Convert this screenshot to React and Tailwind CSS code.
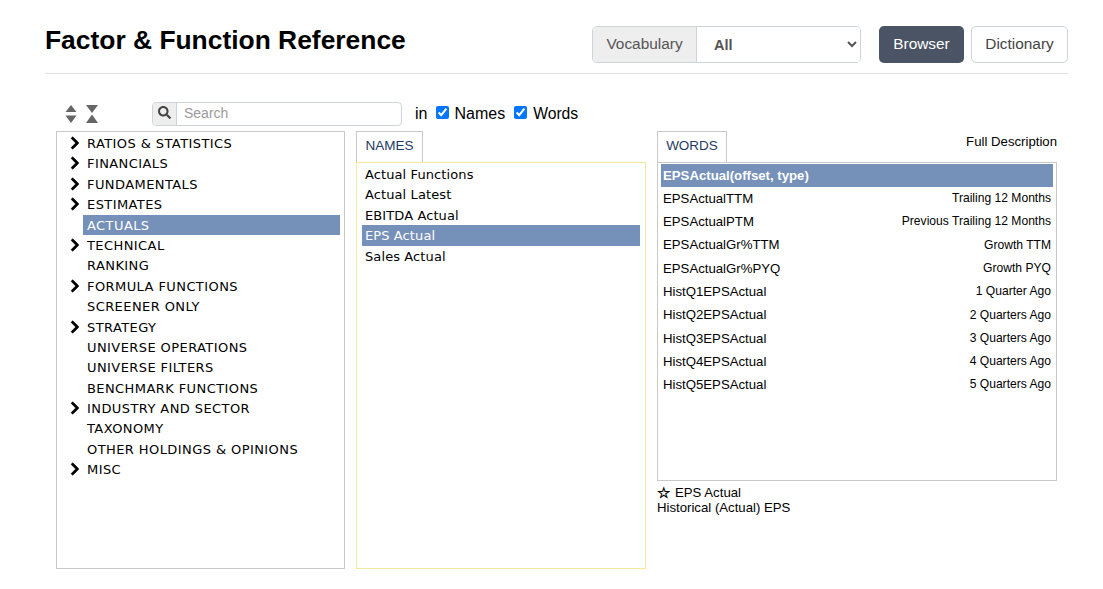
import { FaChevronRight, FaSearch } from "react-icons/fa";

const treeItems = [
  { name: "RATIOS & STATISTICS", sub: true },
  { name: "FINANCIALS", sub: true },
  { name: "FUNDAMENTALS", sub: true },
  { name: "ESTIMATES", sub: true },
  { name: "ACTUALS", active: true },
  { name: "TECHNICAL", sub: true },
  { name: "RANKING" },
  { name: "FORMULA FUNCTIONS", sub: true },
  { name: "SCREENER ONLY" },
  { name: "STRATEGY", sub: true },
  { name: "UNIVERSE OPERATIONS" },
  { name: "UNIVERSE FILTERS" },
  { name: "BENCHMARK FUNCTIONS" },
  { name: "INDUSTRY AND SECTOR", sub: true },
  { name: "TAXONOMY" },
  { name: "OTHER HOLDINGS & OPINIONS" },
  { name: "MISC", sub: true },
];

const names = ["Actual Functions", "Actual Latest", "EBITDA Actual", "EPS Actual", "Sales Actual"];

const words = [
  ["EPSActualTTM", "Trailing 12 Months"],
  ["EPSActualPTM", "Previous Trailing 12 Months"],
  ["EPSActualGr%TTM", "Growth TTM"],
  ["EPSActualGr%PYQ", "Growth PYQ"],
  ["HistQ1EPSActual", "1 Quarter Ago"],
  ["HistQ2EPSActual", "2 Quarters Ago"],
  ["HistQ3EPSActual", "3 Quarters Ago"],
  ["HistQ4EPSActual", "4 Quarters Ago"],
  ["HistQ5EPSActual", "5 Quarters Ago"],
];

function SortIcons() {
  return (
    <div className="flex w-[96px] items-center gap-[9px] pl-[9px]">
      <svg width="12" height="18" viewBox="0 0 12 18" fill="#666">
        <path d="M6 0l5.500 7H.500zM.500 10.500h11L6 18z" />
      </svg>
      <svg width="12" height="18" viewBox="0 0 12 18" fill="#666">
        <path d="M0 0h12L6 8zM6 9.500L12 18H0z" />
      </svg>
    </div>
  );
}

export default function App() {
  return (
    <div className="h-[589px] w-[1103px] overflow-hidden bg-white font-['Liberation_Sans',Arial,sans-serif] text-black">
      <header className="ml-[45px] mr-[35px] flex h-[74px] items-start justify-between border-b border-[#dfdfdf] pt-[26px]">
        <h1 className="mt-[-2px] text-[26.4px] leading-[32px] font-bold">Factor &amp; Function Reference</h1>
        <div className="flex">
          <div className="flex h-[37px] w-[269px] rounded-[5px] border border-[#ced4da] text-[15.4px] text-[#555]">
            <span className="flex w-[104px] items-center justify-center rounded-l-[4px] border-r border-[#ced4da] bg-[#eeeeee] pb-[2px]">
              Vocabulary
            </span>
            <select className="flex-1 rounded-r-[4px] bg-white pl-[13px] text-[14.5px] font-semibold text-[#555] outline-none">
              <option>All</option>
            </select>
          </div>
          <button className="ml-[18px] h-[37px] w-[85px] rounded-[5px] bg-[#4a5464] pb-[2px] text-[15.4px] text-white">
            Browser
          </button>
          <button className="ml-[7px] h-[37px] w-[97px] rounded-[5px] border border-[#ced4da] bg-white pb-[2px] text-[15.4px] text-[#444]">
            Dictionary
          </button>
        </div>
      </header>

      <div className="ml-[56px] mt-[27px] flex h-[25px] items-center">
        <SortIcons />
        <div className="flex h-[24px] w-[250px] rounded-[4px] border border-[#ced4da]">
          <span className="flex w-[24px] items-center justify-center rounded-l-[4px] border-r border-[#ced4da] bg-[#eeeeee] pb-[2px] text-[#444]">
            <FaSearch size={13} />
          </span>
          <input
            className="min-w-0 flex-1 px-[7px] text-[14px] outline-none placeholder:text-[#9a9a9a]"
            placeholder="Search"
          />
        </div>
        <span className="ml-[13px] pt-[1px] text-[16px]">in</span>
        <input type="checkbox" defaultChecked className="ml-[9px] mb-[3px] h-[13px] w-[13px]" />
        <span className="ml-[5px] pt-[1px] text-[16px]">Names</span>
        <input type="checkbox" defaultChecked className="ml-[9px] mb-[3px] h-[13px] w-[13px]" />
        <span className="ml-[6px] pt-[1px] text-[15.7px]">Words</span>
      </div>

      <div className="ml-[56px] mt-[5px] flex items-start">
        <div className="h-[438px] w-[289px] border border-[#c9c9c9] pl-[26px] pr-[4px] pt-[1px] font-['DejaVu_Sans',Verdana,sans-serif] text-[13px]">
          {treeItems.map((item) => (
            <div
              key={item.name}
              className={`relative h-[20.4px] pl-[4px] leading-[22px] tracking-[0.42px] ${
                item.active ? "bg-[#7590b9] text-white" : ""
              }`}
            >
              {item.sub && (
                <FaChevronRight size={14} className="absolute left-[-15px] top-[3px] stroke-[30px] text-black" />
              )}
              {item.name}
            </div>
          ))}
        </div>

        <div className="ml-[11px] w-[290px]">
          <div className="flex h-[31px] w-[67px] items-center justify-center border border-b-0 border-[#c9c9c9] pb-[2px] text-[13.5px] text-[#1f3a5f]">
            NAMES
          </div>
          <div className="h-[407px] border border-[#f4e99b] px-[5px] pt-[1px] font-['DejaVu_Sans',Verdana,sans-serif] text-[13px]">
            {names.map((name) => (
              <div
                key={name}
                className={`h-[20.4px] pl-[3px] leading-[22px] tracking-[0.1px] ${
                  name === "EPS Actual" ? "bg-[#7590b9] text-white" : ""
                }`}
              >
                {name}
              </div>
            ))}
          </div>
        </div>

        <div className="ml-[11px] w-[400px]">
          <div className="flex h-[31px] items-start justify-between">
            <div className="flex h-[31px] w-[70px] items-center justify-center border border-b-0 border-[#c9c9c9] pb-[2px] text-[13.5px] text-[#1f3a5f]">
              WORDS
            </div>
            <span className="text-[13.2px] leading-[22px]">Full Description</span>
          </div>
          <div className="h-[319px] border border-[#c9c9c9] px-[3px] pt-[1px]">
            <div className="h-[23px] bg-[#7590b9] pl-[2px] text-[13.2px] leading-[23px] font-bold text-white">
              EPSActual(offset, type)
            </div>
            {words.map(([word, desc]) => (
              <div key={word} className="flex h-[23.3px] items-center justify-between pl-[2px] pr-[2px] text-[13.2px]">
                <span>{word}</span>
                <span className="pb-[1px] text-[12.1px]">{desc}</span>
              </div>
            ))}
          </div>
          <div className="mt-[4px] text-[13.2px] leading-[15px]">
            <div className="flex h-[15px] items-center">
              <span className="text-[15px] leading-[15px] font-bold">☆</span>
              <span className="ml-[5px]">EPS Actual</span>
            </div>
            <div>Historical (Actual) EPS</div>
          </div>
        </div>
      </div>
    </div>
  );
}
